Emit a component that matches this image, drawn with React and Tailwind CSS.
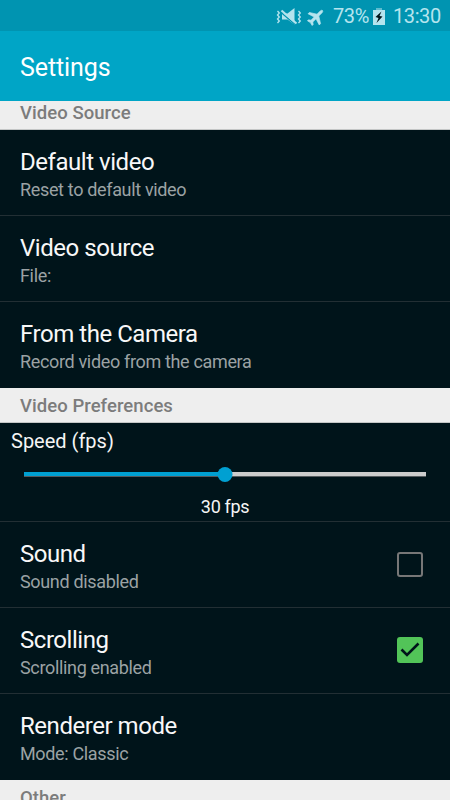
const StatusBar = () => (
  <div className="flex h-[31px] shrink-0 items-center bg-[#0094b1] pl-[276px] pt-[2px] text-[#b5e4ee]">
    {/* Muted / vibrate */}
    <svg width="26" height="20" viewBox="0 0 26 20" fill="none" stroke="currentColor" className="shrink-0">
      <path d="M1.500 4l1.800 2L1.500 8l1.800 2L1.500 12l1.800 2L1.500 16" strokeWidth="1.300" />
      <path d="M22.500 4l1.800 2L22.500 8l1.800 2L22.500 12l1.800 2L22.500 16" strokeWidth="1.300" />
      <path d="M6 6.500h5.500l7-5.500v16.500l-7-5H6z" fill="currentColor" stroke="none" />
      <path d="M4.500 5l14 12" stroke="#0094b1" strokeWidth="1.200" />
      <path d="M5.500 3.500l15 13" strokeWidth="2" />
    </svg>
    {/* Airplane mode */}
    <svg
      width="20"
      height="20"
      viewBox="0 0 24 24"
      fill="currentColor"
      stroke="currentColor"
      strokeWidth="0.800"
      className="ml-[4px] shrink-0 rotate-45"
    >
      <path d="M21.500 16v-2.200l-8-5V3.300C13.500 2.200 12.900 1 12 1s-1.500 1.200-1.500 2.300v5.500l-8 5V16l8-2.500V19l-2.500 1.800v1.700l4-1 4 1v-1.700L13.500 19v-5.500z" />
    </svg>
    <span className="ml-[7px] w-[37px] whitespace-nowrap text-[20px] leading-[29px] tracking-[-0.400px]">73%</span>
    {/* Battery */}
    <svg width="12" height="17" viewBox="0 0 12 17" className="ml-[3px] shrink-0">
      <path d="M0 2h3V0h6v2h3v15H0z" fill="currentColor" />
      <path d="M3 0h6v2H3z" fill="#5fbccf" />
      <path d="M8.500 3.500L2.500 9l3 1-2 5L9.500 8.500l-3-.5z" fill="#00141a" />
    </svg>
    <span className="ml-[8px] whitespace-nowrap text-[20px] leading-[29px] tracking-[-0.400px]">13:30</span>
  </div>
);

const SectionHeader = ({ title }) => (
  <div className="h-[35px] shrink-0 border-b border-[#c4c6c6] bg-[#eeeeee] pl-5 text-[18.5px] font-medium leading-[37px] tracking-[0.050px] text-[#7c7c7c]">
    {title}
  </div>
);

const Checkbox = ({ checked }) =>
  checked ? (
    <div className="mb-[2px] flex h-[26px] w-[26px] items-center justify-center rounded-[3px] bg-[#52c458]">
      <svg width="26" height="26" viewBox="0 0 26 26" fill="none" stroke="#00141a" strokeWidth="2.600">
        <path d="M4.500 12.500l5.500 5.500L21.500 6.500" />
      </svg>
    </div>
  ) : (
    <div className="h-[25px] w-[26px] rounded-[3px] border-2 border-[#777777]" />
  );

const Row = ({ title, summary, checked, last }) => (
  <div
    className={`flex h-[86px] shrink-0 items-center justify-between border-b pl-5 pr-[27px] ${
      last ? 'border-transparent' : 'border-[#222f34]'
    }`}
  >
    <div className="pt-1">
      <div className="text-[24px] leading-[30px] tracking-[-0.460px] text-[#f8f8f8]">{title}</div>
      <div className="text-[18px] leading-[25px] tracking-[-0.340px] text-[#9ba2a4]">{summary}</div>
    </div>
    {checked !== undefined && <Checkbox checked={checked} />}
  </div>
);

const SpeedSlider = ({ value, max }) => {
  const percent = (value / max) * 100;

  return (
    <div className="h-[99px] shrink-0 border-b border-[#222f34] text-[#f5f5f5]">
      <div className="pl-[11px] pt-[5px] text-[20px] leading-[26px]">Speed (fps)</div>
      <div className="relative ml-6 mr-[24px] mt-[18px] h-[5px] border-b border-[#555b5e] bg-[#cccccc]">
        <div className="h-[4px] bg-[#00a0d2]" style={{ width: `${percent}%` }} />
        <div
          className="absolute top-[-5px] h-[15px] w-[15px] -translate-x-1/2 rounded-full bg-[#00a0d2]"
          style={{ left: `${percent}%` }}
        />
      </div>
      <div className="mt-[17px] text-center text-[18px] leading-[25px] tracking-[-0.350px]">{value} fps</div>
    </div>
  );
};

const videoSource = [
  { title: 'Default video', summary: 'Reset to default video' },
  { title: 'Video source', summary: 'File:' },
  { title: 'From the Camera', summary: 'Record video from the camera' },
];

const videoPreferences = [
  { title: 'Sound', summary: 'Sound disabled', checked: false },
  { title: 'Scrolling', summary: 'Scrolling enabled', checked: true },
  { title: 'Renderer mode', summary: 'Mode: Classic' },
];

const App = () => {
  return (
    <div className="flex h-[800px] w-[450px] flex-col overflow-hidden bg-[#00141a] font-['Roboto',sans-serif]">
      <StatusBar />
      <header className="flex h-[70px] shrink-0 items-center bg-[#00a5c6] pl-5 pt-[3px] text-[25px] tracking-[-0.100px] text-white">
        Settings
      </header>

      {/* List is scrolled slightly under the header */}
      <main className="flex min-h-0 flex-1 flex-col overflow-hidden">
        <div className="-mt-[6px] flex flex-col">
          <SectionHeader title="Video Source" />
          {videoSource.map((item, i) => (
            <Row key={item.title} {...item} last={i === videoSource.length - 1} />
          ))}
          <SectionHeader title="Video Preferences" />
          <SpeedSlider value={30} max={60} />
          {videoPreferences.map((item, i) => (
            <Row key={item.title} {...item} last={i === videoPreferences.length - 1} />
          ))}
          <SectionHeader title="Other" />
        </div>
      </main>
    </div>
  );
};

export default App;
